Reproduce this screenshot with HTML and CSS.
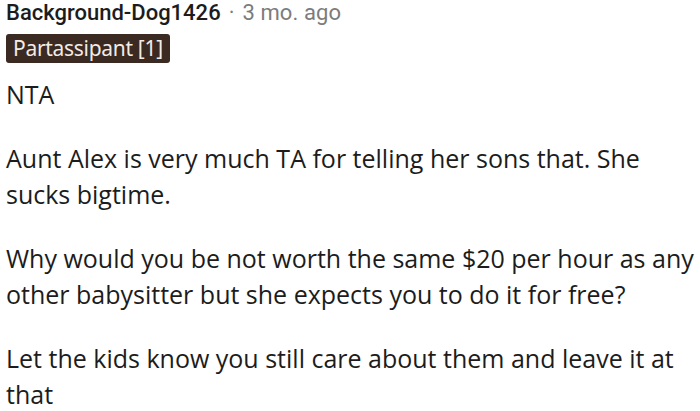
FILE: index.html
```html
<!DOCTYPE html>
<html>
<head>
<meta charset="utf-8">
<link rel="stylesheet" href="styles.css">
</head>
<body>
<div class="comment">
  <div class="meta">
    <span class="author">Background-Dog1426</span>
    <span class="dot">·</span>
    <span class="time">3 mo. ago</span>
  </div>
  <div class="flair-row"><span class="flair">Partassipant [1]</span></div>
  <div class="body">
    <p>NTA</p>
    <p>Aunt Alex is very much TA for telling her sons that. She sucks bigtime.</p>
    <p>Why would you be not worth the same $20 per hour as any other babysitter but she expects you to do it for free?</p>
    <p>Let the kids know you still care about them and leave it at that</p>
  </div>
</div>
</body>
</html>
```

FILE: styles.css
```css
html, body {
  margin: 0;
  padding: 0;
  background: #ffffff;
}
.comment {
  padding: 0 6px;
  width: 688px;
}
.meta {
  display: flex;
  align-items: baseline;
  font-family: Roboto, sans-serif;
  font-size: 22px;
  line-height: 26px;
  gap: 8px;
}
.author {
  font-weight: 500;
  color: #1c1c1c;
  letter-spacing: 0;
}
.dot, .time {
  color: #7c7c7c;
}
.time {
  letter-spacing: 0.1px;
}
.flair-row {
  display: flex;
  margin-top: 8px;
}
.flair {
  background: #3b2a22;
  color: #f2ece6;
  font-family: "Noto Sans", sans-serif;
  font-size: 21px;
  line-height: 29px;
  padding: 0 7px;
  letter-spacing: -0.3px;
  border-radius: 3px;
}
.body {
  font-family: "Open Sans", sans-serif;
  font-size: 25px;
  line-height: 36px;
  color: #1c1c1c;
  font-stretch: 88%;
}
.body p {
  margin: 0;
}
.body p + p {
  margin-top: 28px;
}
.body p:first-child {
  margin-top: 13px;
}
```
